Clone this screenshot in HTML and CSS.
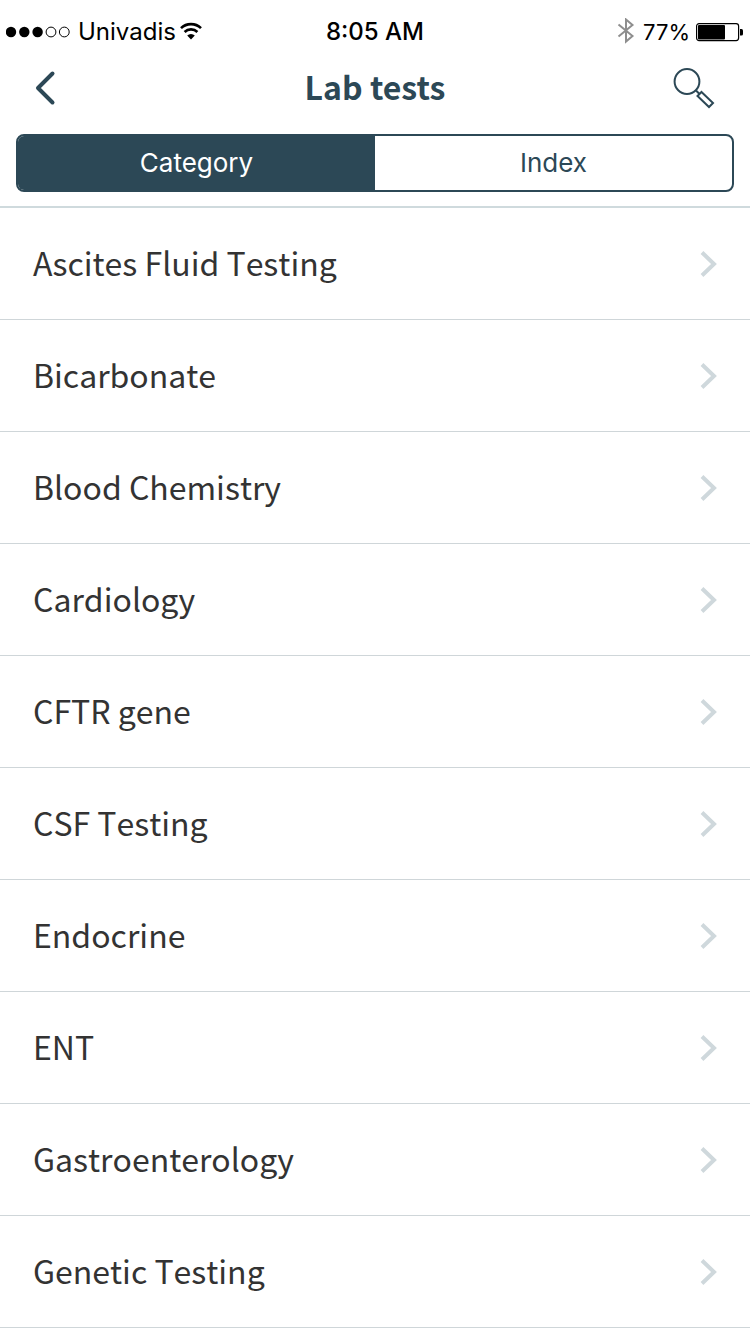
FILE: index.html
```html
<!DOCTYPE html>
<html lang="en">
    <head>
        <meta charset="UTF-8">
        <meta name="viewport" content="width=device-width, initial-scale=1.0">
        <title>Lab tests</title>
        <link rel="stylesheet" href="styles.css">
    </head>
    <body>
        <!-- shared row arrow -->
        <svg class="sprite" aria-hidden="true">
            <symbol id="arrow" viewBox="0 0 18 28">
                <path d="M2 2.500L14 14L2 25.500" fill="none" stroke="currentColor" stroke-width="4"/>
            </symbol>
        </svg>

        <div class="status">
            <div class="status-left">
                <svg width="66" height="14" viewBox="0 0 66 14" aria-hidden="true">
                    <circle cx="5" cy="7" r="5.2"/>
                    <circle cx="18.300" cy="7" r="5.2"/>
                    <circle cx="31.600" cy="7" r="5.2"/>
                    <circle cx="45" cy="7" r="4.9" fill="none" stroke="#000"/>
                    <circle cx="58.300" cy="7" r="4.9" fill="none" stroke="#000"/>
                </svg>
                <span class="carrier">Univadis</span>
                <svg width="22" height="20" viewBox="0 0 22 20" aria-hidden="true">
                    <path d="M1 6.2A14.2 14.2 0 0 1 21 6.2M4.6 10A9 9 0 0 1 17.4 10" fill="none" stroke="#000" stroke-width="2.6"/>
                    <path d="M11 17.6L7.2 13.6A5.3 5.3 0 0 1 14.8 13.6Z"/>
                </svg>
            </div>
            <span class="time">8:05 AM</span>
            <div class="status-right">
                <svg width="18" height="28" viewBox="0 0 18 28" aria-hidden="true">
                    <path d="M1.5 6.500L15.500 18L9 23.500V1.500L15.500 7L1.500 18.500" fill="none" stroke="#8e8e8e" stroke-width="2"/>
                </svg>
                <span class="percent">77%</span>
                <svg width="48" height="20" viewBox="0 0 48 20" aria-hidden="true">
                    <rect x=".6" y="1.600" width="42" height="17" rx="2.500" fill="none" stroke="#000" stroke-width="1.200"/>
                    <rect x="2" y="3" width="27" height="14.400" rx="1"/>
                    <path d="M44 7H45.500Q47 7 47 8.500V12Q47 13.500 45.500 13.500H44Z"/>
                </svg>
            </div>
        </div>

        <header class="header">
            <div class="title-bar">
                <button class="icon-btn" type="button" aria-label="Back">
                    <svg width="24" height="36" viewBox="0 0 24 36">
                        <path d="M18.500 3.500L4 18L18.500 32.500" fill="none" stroke="currentColor" stroke-width="4" stroke-linecap="round" stroke-linejoin="round"/>
                    </svg>
                </button>
                <h1>Lab tests</h1>
                <button class="icon-btn search" type="button" aria-label="Search">
                    <svg width="44" height="44" viewBox="0 0 44 44">
                        <g fill="none" stroke="currentColor" stroke-width="2">
                            <circle cx="15" cy="15.500" r="12.400"/>
                            <path d="M24 24.500L28 28.500M29.500 26L41 37L37 41L25.500 30Z"/>
                        </g>
                    </svg>
                </button>
            </div>
            <div class="tabs">
                <button class="tab active" type="button">Category</button>
                <button class="tab" type="button">Index</button>
            </div>
        </header>

        <ul class="list">
            <li><a href="#"><span>Ascites Fluid Testing</span><svg class="arrow"><use href="#arrow"/></svg></a></li>
            <li><a href="#"><span>Bicarbonate</span><svg class="arrow"><use href="#arrow"/></svg></a></li>
            <li><a href="#"><span>Blood Chemistry</span><svg class="arrow"><use href="#arrow"/></svg></a></li>
            <li><a href="#"><span>Cardiology</span><svg class="arrow"><use href="#arrow"/></svg></a></li>
            <li><a href="#"><span>CFTR gene</span><svg class="arrow"><use href="#arrow"/></svg></a></li>
            <li><a href="#"><span>CSF Testing</span><svg class="arrow"><use href="#arrow"/></svg></a></li>
            <li><a href="#"><span>Endocrine</span><svg class="arrow"><use href="#arrow"/></svg></a></li>
            <li><a href="#"><span>ENT</span><svg class="arrow"><use href="#arrow"/></svg></a></li>
            <li><a href="#"><span>Gastroenterology</span><svg class="arrow"><use href="#arrow"/></svg></a></li>
            <li><a href="#"><span>Genetic Testing</span><svg class="arrow"><use href="#arrow"/></svg></a></li>
        </ul>
    </body>
</html>
```
FILE: styles.css
```css
*{
    margin: 0;
    padding: 0;
    box-sizing: border-box;
}
body{
    background-color: #fff;
    color: #333;
    font-family: "Noto Sans CJK SC", sans-serif;
}
svg{
    display: block;
    flex: none;
}
button{
    border: none;
    background: none;
    color: inherit;
    cursor: pointer;
}
.sprite{
    display: none;
}

/* status bar */
.status{
    display: grid;
    grid-template-columns: 1fr auto 1fr;
    align-items: center;
    padding: 12px 6px 0;
    color: #000;
    font-family: Inter, sans-serif;
    font-size: 24px;
    line-height: 40px;
}
.status-left,
.status-right{
    display: flex;
    align-items: center;
}
.status-right{
    justify-content: flex-end;
    gap: 6px;
}
.carrier{
    margin: 0 4px 0 6px;
}
.time{
    font-weight: 500;
}
.percent{
    margin-left: 2px;
    font-size: 22px;
}

/* header */
.header{
    border-bottom: 2px solid #cfdadd;
    color: #2c4856;
}
.title-bar{
    display: grid;
    grid-template-columns: 1fr auto 1fr;
    align-items: center;
    height: 72px;
    padding: 0 34px;
}
.title-bar h1{
    padding-bottom: 4px;
    font-size: 32px;
    font-weight: 700;
    line-height: 48px;
}
.icon-btn{
    justify-self: start;
}
.search{
    justify-self: end;
}
.tabs{
    display: flex;
    margin: 10px 16px 14px;
    border: 2px solid #2c4856;
    border-radius: 8px;
    overflow: hidden;
}
.tab{
    flex: 1;
    font-family: Inter, sans-serif;
    font-size: 26px;
    line-height: 54px;
}
.tab.active{
    background-color: #2c4856;
    color: #fff;
}

/* categories */
.list{
    list-style: none;
}
.list a{
    display: flex;
    align-items: center;
    justify-content: space-between;
    height: 112px;
    padding: 0 32px 0 33px;
    border-bottom: 1px solid #cfd6d9;
    color: #333;
    font-size: 32px;
    font-kerning: none;
    text-decoration: none;
}
.list span{
    padding-bottom: 4px;
}
.arrow{
    width: 18px;
    height: 28px;
    color: #cfd8dc;
}
```
